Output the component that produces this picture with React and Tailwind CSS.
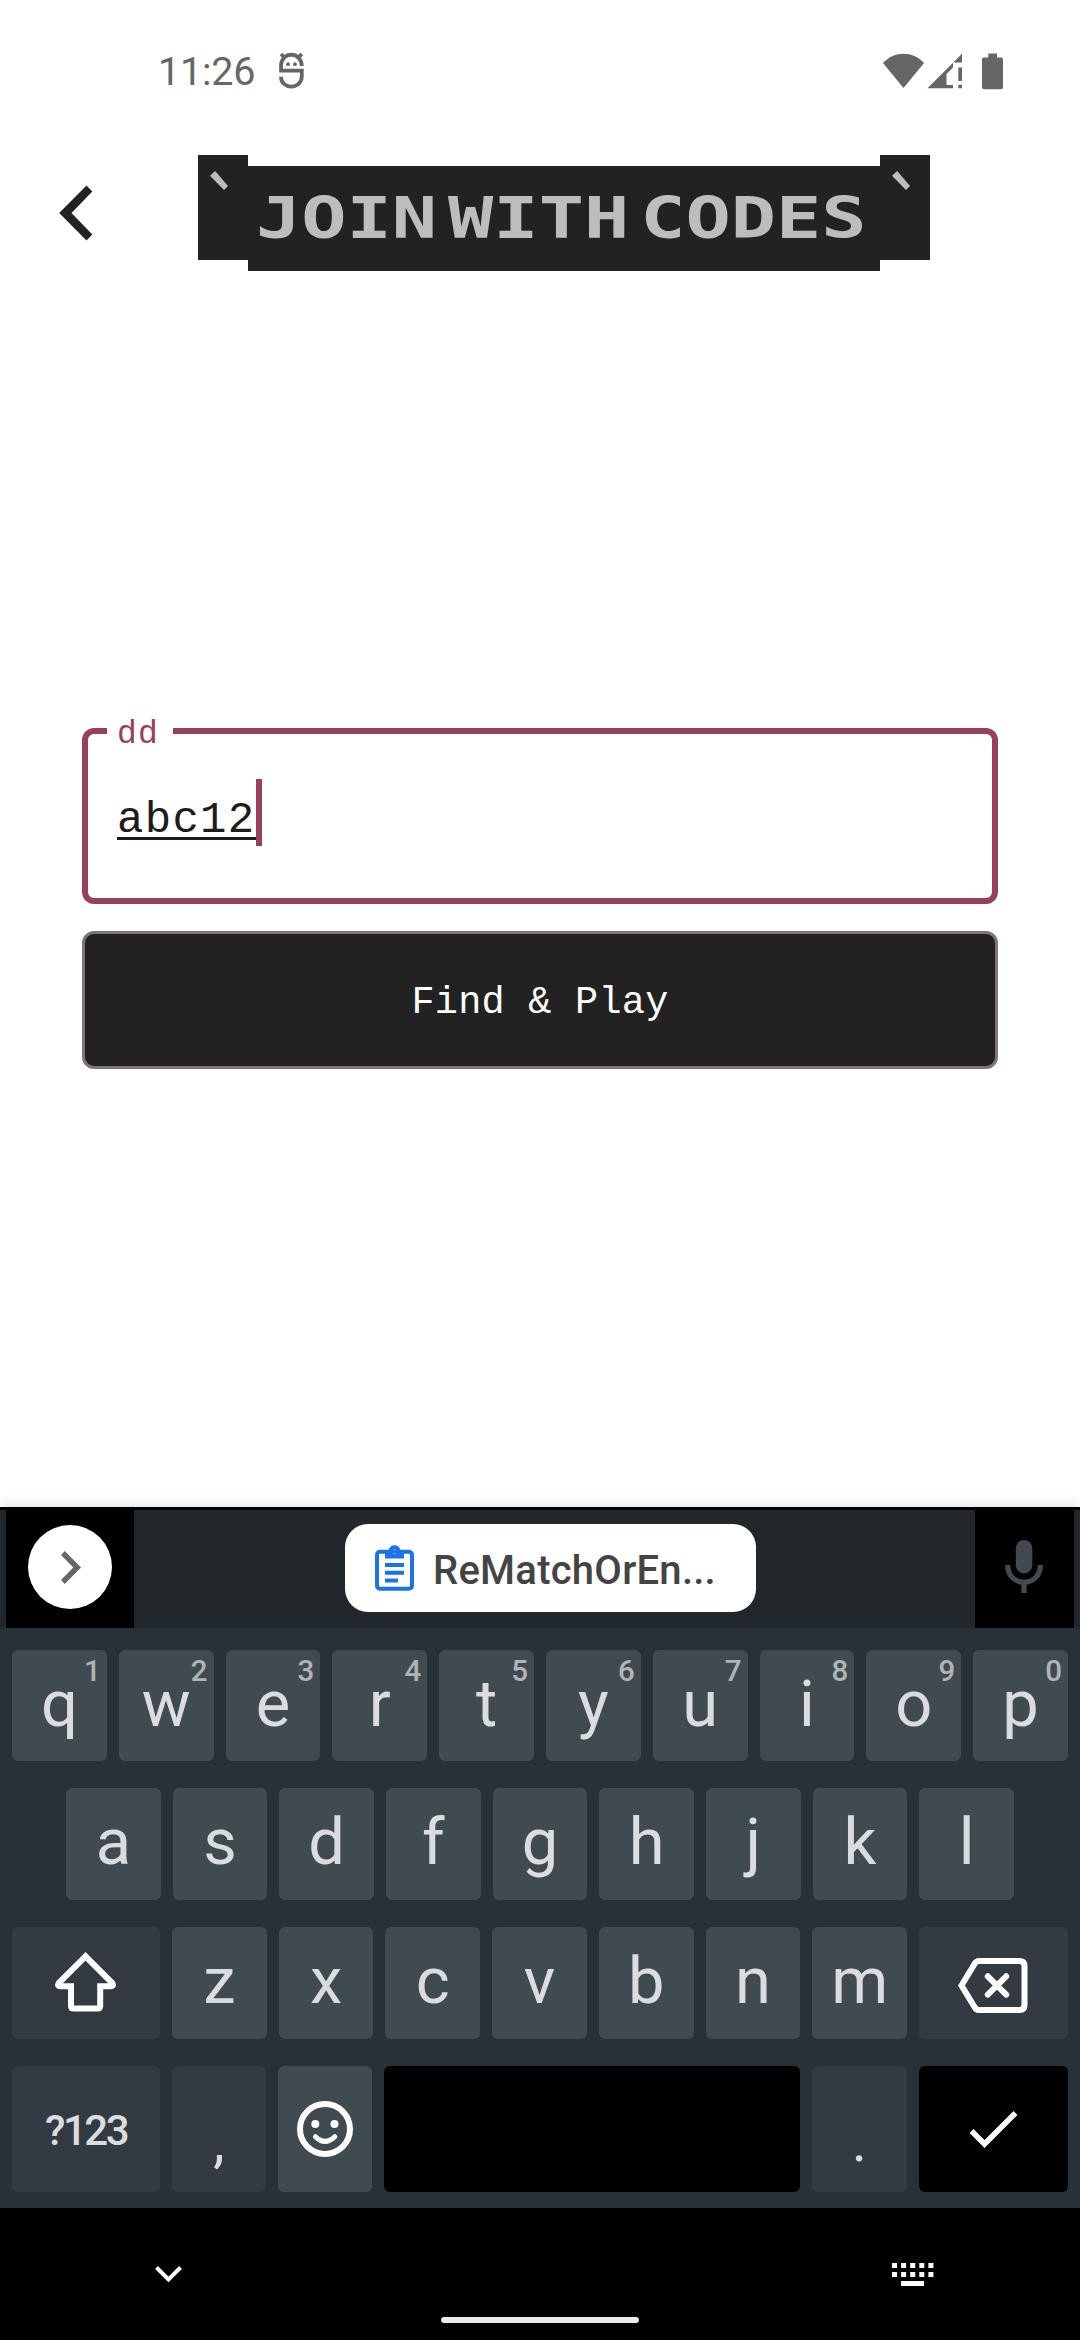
const MONO = "font-['Liberation_Mono',monospace]";

function StatusBar() {
  return (
    <header className="flex h-[141px] items-center justify-between pl-[158px] pr-[76px] text-[#666666]">
      <div className="flex items-center">
        <span className="w-[120px] pt-[3px] font-['Roboto',sans-serif] text-[39.5px] leading-[48px] tracking-[-0.2px]">11:26</span>
        <svg className="h-[38px] w-[27px]" viewBox="278 52.500 27 38" fill="none" stroke="currentColor" strokeWidth="3.800">
          <path d="M281 72V66.500C281 51.500 301.500 51.500 301.800 66.500M281 54.500l3.500 3.500M301.800 54.500l-3.500 3.500M279.300 71.200H301.800V76.500C301.800 90.500 281 90.500 281 77.200" />
          <circle cx="288" cy="64.700" r="1.900" fill="currentColor" stroke="none" />
          <circle cx="295" cy="64.700" r="1.900" fill="currentColor" stroke="none" />
        </svg>
      </div>
      <svg className="h-[38px] w-[122px]" viewBox="882 51.500 122 38" fill="currentColor">
        <path d="M903.500 87.500 883 62.500C894.500 50.300 912.500 50.300 924 62.500Z" />
        <path d="M927.500 87.700 962 53.300V62H953V67L946.500 73.500V84.500H953V87.700Z" />
        <path d="M958.300 67H962V80.500H958.300ZM958.300 84.200H962V87.700H958.300Z" />
        <path d="M988.300 53H997V57H1001C1002.200 57 1003 57.800 1003 59V86.700C1003 87.900 1002.200 88.700 1001 88.700H984C982.800 88.700 982 87.900 982 86.700V59C982 57.800 982.800 57 984 57H988.300Z" />
      </svg>
    </header>
  );
}

function Tick() {
  return (
    <div className="h-[105px] w-[50px] bg-[#222222] pl-[12px] pt-[16px]">
      <svg className="h-[19px] w-[18px]" viewBox="0 0 18 19" preserveAspectRatio="none" fill="#bdbdbd">
        <path d="M0 4.800 5.200 0 18 15 14 19Z" />
      </svg>
    </div>
  );
}

function TitleBar() {
  return (
    <div className="flex h-[154px] items-start pl-[59px] pt-[14px]">
      <svg className="mt-[30px] h-[57px] w-[34px]" viewBox="59 185 34 57" fill="#222222">
        <path d="M86.500 185.500 92.300 191.500 71.500 213 92.300 234.500 86.500 240.500 59.200 213Z" />
      </svg>
      <div className="ml-[105px] flex items-start">
        <Tick />
        <h1 className="mt-[11px] h-[105px] w-[632px] overflow-hidden bg-[#222222] pl-[8px]">
          <span className="block w-[480px] origin-left scale-x-[1.306] whitespace-nowrap font-['DejaVu_Sans_Mono',monospace] text-[57.600px] leading-[106px] font-bold text-[#bdbdbd] [word-spacing:-26.300px]">
            JOIN WITH CODES
          </span>
        </h1>
        <Tick />
      </div>
    </div>
  );
}

function JoinForm() {
  return (
    <main className="flex h-[1212px] flex-col px-[82px] pt-[433px]">
      <div className="relative h-[176px] rounded-[12px] border-[6px] border-[#984061] pl-[29px] pt-[45px]">
        <span className={`absolute -top-[19px] left-[19px] h-[40px] w-[66px] bg-white pl-[10px] text-[33px] leading-[40px] tracking-[1.100px] text-[#984061] ${MONO}`}>
          dd
        </span>
        <div className="flex items-start">
          <span className={`mt-[16px] h-[45px] border-b-[3px] border-[#201a1b] text-[44px] leading-[50px] tracking-[1.300px] text-[#201a1b] ${MONO}`}>
            abc12
          </span>
          <span className="h-[67px] w-[6px] bg-[#984061]" />
        </div>
      </div>
      <button className={`mt-[27px] h-[138px] rounded-[12px] border-[3px] border-[#81737a] bg-[#222222] pt-[8px] text-[38.500px] tracking-[0.275px] text-white ${MONO}`}>
        Find &amp; Play
      </button>
    </main>
  );
}

function SuggestionBar() {
  return (
    <div className="flex h-[121px] items-stretch justify-between border-t-[3px] border-black bg-[#22272b] px-[6px]">
      <div className="flex w-[128px] items-center bg-black pb-[4px] pl-[22px]">
        <div className="flex h-[84px] w-[84px] items-center justify-center rounded-full bg-white">
          <svg className="ml-[2px] h-[33px] w-[20px]" viewBox="0 0 20 33" fill="#666666">
            <path d="M3.800 0 20 16.500 3.800 33 0 29 12.300 16.500 0 4Z" />
          </svg>
        </div>
      </div>
      <div className="mr-[8px] mt-[14px] flex h-[88px] w-[411px] items-center rounded-[23px] bg-white pl-[30px]">
        <svg className="h-[46px] w-[39px]" viewBox="0 0 39 46" fill="none" stroke="#1a73e8" strokeWidth="4">
          <rect x="2" y="6.800" width="35" height="37" rx="3" />
          <path d="M10 20H29M10 27.800H29M10 35.500H23" />
          <path fill="#1a73e8" stroke="none" fillRule="evenodd" d="M10 5H13.500C15 -1.500 24 -1.500 25.500 5H29V13.500H10ZM19.500 4.500A2.400 2.400 0 1 0 19.500 9.300A2.400 2.400 0 1 0 19.500 4.500Z" />
        </svg>
        <span className="ml-[19px] pt-[5px] font-['Roboto',sans-serif] text-[40px] font-medium tracking-[0.25px] text-[#444444]">ReMatchOrEn...</span>
      </div>
      <div className="w-[99px] bg-black">
        <svg className="h-[118px] w-[99px]" viewBox="975 1510 99 118" fill="none" stroke="#42494f">
          <rect x="1015.800" y="1540" width="16.500" height="33.500" rx="8.250" fill="#42494f" stroke="none" />
          <path strokeWidth="5.300" d="M1007.700 1565C1007.700 1588 1040.400 1588 1040.400 1565M1024 1581V1593" />
        </svg>
      </div>
    </div>
  );
}

function Key({ label, hint }) {
  return (
    <div className="relative flex h-full flex-1 items-center justify-center rounded-[6px] bg-[#404b50] pb-[4px] text-[65px] leading-[70px] text-[#dadcdf]">
      {label}
      {hint && <span className="absolute right-[6px] top-[4px] text-[29.500px] leading-[34px] font-medium text-[#b0b4b7]">{hint}</span>}
    </div>
  );
}

const topRow = ["q", "w", "e", "r", "t", "y", "u", "i", "o", "p"];
const homeRow = ["a", "s", "d", "f", "g", "h", "j", "k", "l"];
const bottomRow = ["z", "x", "c", "v", "b", "n", "m"];

function Keyboard() {
  return (
    <section className="flex h-[580px] flex-col bg-[#273238] px-[12px] pt-[22px] font-['Roboto',sans-serif]">
      <div className="flex h-[111px] gap-[12px]">
        {topRow.map((k, i) => <Key key={k} label={k} hint={String((i + 1) % 10)} />)}
      </div>
      <div className="mt-[27px] flex h-[112px] gap-[12px] px-[54px]">
        {homeRow.map((k) => <Key key={k} label={k} />)}
      </div>
      <div className="mt-[27px] flex h-[112px] gap-[12px]">
        <div className="w-[148px] rounded-[6px] bg-[#313b41]">
          <svg className="h-[112px] w-[148px]" viewBox="12 1927 148 112" fill="none" stroke="white" strokeWidth="6">
            <path d="M85.500 1956.300 58.500 1983.300Q57 1986.300 60.500 1986.300H71V2006Q71 2008.500 73.500 2008.500H97.500Q100.200 2008.500 100.200 2006V1986.300H110.500Q114 1986.300 112.500 1983.300Z" />
          </svg>
        </div>
        {bottomRow.map((k) => <Key key={k} label={k} />)}
        <div className="w-[149px] rounded-[6px] bg-[#313b41]">
          <svg className="h-[112px] w-[149px]" viewBox="919 1927 149 112" fill="none" stroke="white" strokeWidth="6">
            <path d="M961.500 1985.500 974.500 1964Q976.200 1961 979 1961H1019.500Q1024.500 1961 1024.500 1966V2005Q1024.500 2010 1019.500 2010H979Q976.200 2010 974.500 2007Z" />
            <path strokeLinecap="round" d="M987.800 1976.300 1006.200 1994.700M1006.200 1976.300 987.800 1994.700" />
          </svg>
        </div>
      </div>
      <div className="mt-[27px] flex h-[126px] gap-[12px] text-[#dadcdf]">
        <div className="flex w-[148px] items-center justify-center rounded-[6px] bg-[#313b41] pt-[2px] text-[42px] font-medium tracking-[-2.500px]">?123</div>
        <div className="flex w-[94px] items-center justify-center rounded-[6px] bg-[#313b41] pt-[24px] text-[58px] leading-[60px]">,</div>
        <div className="w-[94px] rounded-[6px] bg-[#404b50]">
          <svg className="h-[126px] w-[94px]" viewBox="278 2066 94 126" fill="none" stroke="white" strokeWidth="6">
            <circle cx="325" cy="2129" r="25" />
            <circle cx="315.300" cy="2124" r="4" fill="white" stroke="none" />
            <circle cx="334.500" cy="2124" r="4" fill="white" stroke="none" />
            <path strokeWidth="5" strokeLinecap="round" d="M315.500 2136.700Q325 2146 334.800 2136.700" />
          </svg>
        </div>
        <div className="flex-1 rounded-[6px] bg-black" />
        <div className="flex w-[95px] items-center justify-center rounded-[6px] bg-[#313b41] pt-[24px] text-[58px] leading-[60px]">.</div>
        <div className="w-[149px] rounded-[6px] bg-black">
          <svg className="h-[126px] w-[149px]" viewBox="919 2066 149 126" fill="none" stroke="white" strokeWidth="5.500">
            <path d="M971.500 2131 984.500 2144 1015.500 2113" />
          </svg>
        </div>
      </div>
    </section>
  );
}

function NavigationBar() {
  return (
    <footer className="flex h-[132px] flex-col bg-black">
      <div className="flex items-start justify-between pl-[154px] pr-[146px] pt-[54px]">
        <svg className="mt-[3px] h-[19px] w-[29px]" viewBox="0 0 29 19" fill="none" stroke="white" strokeWidth="4">
          <path d="M2.500 2.500 14.500 14.500 26.500 2.500" />
        </svg>
        <svg className="h-[25px] w-[42px]" viewBox="0 0 42 25" fill="white">
          {[0, 9.1, 18.2, 27.3, 36.4].map((x) => (
            <path key={x} d={`M${x} 1h5v5h-5zM${x} 10h5v5h-5z`} />
          ))}
          <path d="M9 19h23v5H9z" />
        </svg>
      </div>
      <div className="mx-auto mt-[30px] h-[6px] w-[198px] rounded-full bg-[#ececec]" />
    </footer>
  );
}

export default function App() {
  return (
    <div className="flex h-[2340px] w-[1080px] flex-col overflow-hidden bg-white">
      <StatusBar />
      <TitleBar />
      <JoinForm />
      <div className="relative z-10 shadow-[0_-2px_12px_rgba(0,0,0,0.12)]">
        <SuggestionBar />
        <Keyboard />
        <NavigationBar />
      </div>
    </div>
  );
}
